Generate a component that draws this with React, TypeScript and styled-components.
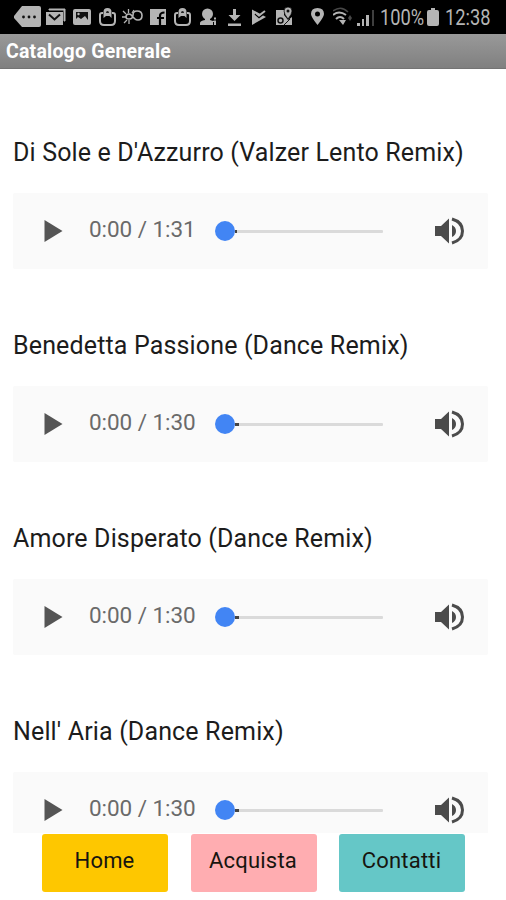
import React from 'react';
import styled, { createGlobalStyle } from 'styled-components';

const GlobalStyle = createGlobalStyle`
  * { box-sizing: border-box; }
  body { margin: 0; background: #fff; font-family: Roboto, "Liberation Sans", sans-serif; }
  button { font: inherit; border: 0; padding: 0; background: none; }
`;

const Screen = styled.div`
  width: 506px;
  height: 900px;
  display: flex;
  flex-direction: column;
  overflow: hidden;
  background: #fff;
`;

const StatusBar = styled.div`
  flex: none;
  height: 34px;
  padding: 0 13px 0 14px;
  display: flex;
  align-items: center;
  background: #000;
  color: #b4b4b4;
`;

const StatusIcon = styled.svg<{ $w: number; $gap?: number }>`
  flex: none;
  width: ${(p) => p.$w}px;
  height: 22px;
  margin-right: ${(p) => p.$gap ?? 5}px;
  fill: currentColor;
  stroke: none;
`;

const StatusText = styled.span<{ $w: number; $gap?: number }>`
  flex: none;
  width: ${(p) => p.$w}px;
  margin-right: ${(p) => p.$gap ?? 0}px;
  font-size: 22px;
  line-height: 34px;
  padding-top: 1px;
  transform: scaleX(0.83);
  transform-origin: 0 50%;
  white-space: nowrap;
`;

const TitleBar = styled.header`
  flex: none;
  height: 35px;
  padding-left: 6px;
  background: linear-gradient(#999, #808080);
  border-bottom: 1px solid #747474;
  color: #fff;
  font-size: 19.5px;
  font-weight: 700;
  line-height: 35px;
  letter-spacing: 0.2px;
`;

const TrackList = styled.main`
  height: 764px;
  flex: none;
  padding: 7px 18px 0 13px;
  overflow: hidden;
`;

const Track = styled.section`
  height: 193px;
  padding-top: 59px;
`;

const TrackTitle = styled.h2`
  margin: 0 0 22px;
  height: 36px;
  font-size: 25px;
  font-weight: 400;
  line-height: 36px;
  letter-spacing: 0.15px;
  color: #1c1c1c;
  white-space: nowrap;
`;

const Player = styled.div`
  height: 76px;
  display: flex;
  align-items: center;
  padding: 0 22px 0 31px;
  background: #fafafa;
  border-radius: 2px;
`;

const PlayButton = styled.button`
  width: 45px;
  height: 22px;
  display: flex;
  color: #555;
`;

const Time = styled.span`
  width: 114px;
  flex: none;
  padding-bottom: 4px;
  font-size: 22.5px;
  line-height: 30px;
  letter-spacing: -0.05px;
  color: #6a6a6a;
  white-space: nowrap;
`;

const Seek = styled.div`
  flex: none;
  width: 168px;
  height: 20px;
  margin-left: 12px;
  display: flex;
  align-items: center;
`;

const Thumb = styled.div`
  width: 20px;
  height: 20px;
  border-radius: 50%;
  background: #4285f4;
`;

const Buffered = styled.div<{ $w: number }>`
  width: ${(p) => p.$w}px;
  height: 3px;
  background: #444;
`;

const Rail = styled.div`
  flex: 1;
  height: 3px;
  background: #dadada;
  border-radius: 0 1px 1px 0;
`;

const VolumeButton = styled.button`
  width: 32px;
  height: 30px;
  margin-left: auto;
  display: flex;
  color: #4b4b4b;
`;

const Nav = styled.nav`
  height: 67px;
  padding: 1px 41px 0 42px;
  display: flex;
  justify-content: space-between;
`;

const NavButton = styled.button<{ $bg: string }>`
  width: 126px;
  height: 58px;
  padding: 0 1px 6px 0;
  border-radius: 3px;
  background: ${(p) => p.$bg};
  color: #17150f;
  font-size: 22px;
  letter-spacing: 0.2px;
`;

const tracks = [
  { title: "Di Sole e D'Azzurro (Valzer Lento Remix)", length: '1:31', buffered: 2 },
  { title: 'Benedetta Passione (Dance Remix)', length: '1:30', buffered: 4 },
  { title: 'Amore Disperato (Dance Remix)', length: '1:30', buffered: 4 },
  { title: "Nell' Aria (Dance Remix)", length: '1:30', buffered: 4 },
];

const Bag = ({ gap }: { gap?: number }) => (
  <StatusIcon $w={17} $gap={gap} viewBox="0 0 17 22">
    <path d="M4 7H3Q1 7 1 9v6q0 4 4 4h7q4 0 4-4V9q0-2-2-2h-1" fill="none" stroke="currentColor" strokeWidth="2" />
    <path d="M4.500 12V6q0-4 4-4t4 4v6l-2-2H7z" />
    <path d="M7 7q0-2 1.500-2T10 7z" fill="#222" />
  </StatusIcon>
);

function StatusIcons() {
  return (
    <>
      <StatusIcon $w={27} $gap={5} viewBox="0 0 27 22">
        <path d="M8 0h17q2 0 2 2v17q0 2-2 2H8L0 12v-2z" />
        <g fill="#111"><circle cx="9.500" cy="11" r="1.400" /><circle cx="15" cy="11" r="1.400" /><circle cx="20.500" cy="11" r="1.400" /></g>
      </StatusIcon>
      <StatusIcon $w={20} $gap={7} viewBox="0 0 20 22">
        <path d="M3 4V3h16v12h-1V4z" stroke="currentColor" strokeWidth="1" />
        <path d="M0 6h17v13H0z" />
        <path d="m3 8.500 5.500 5 5.500-5" fill="none" stroke="#111" strokeWidth="2" />
      </StatusIcon>
      <StatusIcon $w={18} $gap={8} viewBox="0 0 18 22">
        <path d="M2 3h14q2 0 2 2v12q0 2-2 2H2q-2 0-2-2V5q0-2 2-2z" />
        <path d="M3 6h12v8l-3-4-4 3-3-2-2 2z" fill="#111" />
        <circle cx="5.500" cy="8" r="1.200" />
      </StatusIcon>
      <Bag gap={6} />
      <StatusIcon $w={21} $gap={7} viewBox="0 0 21 22">
        <path d="M1 5l3 3M6.500 3v4M0 11h4M2 17l3-3M7 18v-4M10 7l2-3" fill="none" stroke="currentColor" strokeWidth="1.300" />
        <path d="M4 11q0-3 3-3 2 0 3 2l3 3q1 1 3 1 4 0 4-4.500T15 5q-4 0-4 4 0 4-4 4-3 0-3-2z" fill="none" stroke="currentColor" strokeWidth="1.600" />
      </StatusIcon>
      <StatusIcon $w={16} $gap={8} viewBox="0 0 16 22">
        <path d="M0 3h16v16H0z" />
        <path d="M10 19v-9q0-3.500 4.500-3.500M7 12h7" fill="none" stroke="#000" strokeWidth="2.200" />
      </StatusIcon>
      <Bag gap={9} />
      <StatusIcon $w={17} $gap={11} viewBox="0 0 17 22">
        <circle cx="7.500" cy="8" r="5.500" />
        <path d="M5 11h5v3l3 1v4H0v-2q0-2 5-3zM14 14.500h2V19h-2v-3h-1v-1z" />
        <path d="M14 11.500h2v2h-2z" />
      </StatusIcon>
      <StatusIcon $w={13} $gap={11} viewBox="0 0 13 22">
        <path d="M5 3h3v6h4.500l-6 6-6-6H5zM0 17.500h13V20H0z" />
      </StatusIcon>
      <StatusIcon $w={14} $gap={10} viewBox="0 0 14 22">
        <path d="M0 3.500l14 7.500L0 19z" />
        <path d="M3 8l4 3.500L14 6" fill="none" stroke="#000" strokeWidth="1.500" />
        <path d="M4 7l3 2.500L13 5" fill="none" stroke="currentColor" strokeWidth="2" />
      </StatusIcon>
      <StatusIcon $w={16} $gap={19} viewBox="0 0 16 22">
        <path d="M0 4h8v5l4 5 4-3v8H0z" />
        <circle cx="4.500" cy="14.500" r="2.500" fill="none" stroke="#111" strokeWidth="1.500" />
        <path d="M8 19l6-6" stroke="#111" />
        <path d="M12 13q-4-5-4-8 0-4 4-4t4 4q0 3-4 8z" stroke="#000" strokeWidth=".7" />
        <circle cx="12" cy="5" r="1.500" fill="#111" />
      </StatusIcon>
      <StatusIcon $w={13} $gap={9} viewBox="0 0 13 22">
        <path fillRule="evenodd" d="M6.500 19Q0 11 0 8 0 2 6.500 2T13 8Q13 11 6.500 19zM6.500 10.500a2.500 2.500 0 1 0 0-5 2.500 2.500 0 0 0 0 5z" />
      </StatusIcon>
      <StatusIcon $w={20} $gap={4} viewBox="0 0 20 22">
        <g fill="none" stroke="currentColor">
          <path d="M0 5q8-6 15 1" opacity=".4" strokeWidth="1.500" />
          <path d="M0 9q6-5 13 0M3 13q4-4 8 0" strokeWidth="2" />
        </g>
        <path d="M6 14h7l-3 5z" /><path d="m17 9 2 3-2 3-2-3z" opacity=".4" />
      </StatusIcon>
      <StatusIcon $w={17} $gap={6} viewBox="0 0 17 22">
        <path d="M0 17h3v3H0zM5 13h2v7H5zM9 9h3v11H9z" />
        <path d="M15 4h2v16h-2z" opacity=".35" />
      </StatusIcon>
    </>
  );
}

export default function App() {
  return (
    <Screen>
      <GlobalStyle />
      <StatusBar>
        <StatusIcons />
        <StatusText $w={44} $gap={3}>100%</StatusText>
        <StatusIcon $w={12} $gap={6} viewBox="0 0 12 22">
          <path d="M4 2h4v2h2q2 0 2 2v12q0 2-2 2H2q-2 0-2-2V6q0-2 2-2h2z" />
        </StatusIcon>
        <StatusText $w={46}>12:38</StatusText>
      </StatusBar>
      <TitleBar>Catalogo Generale</TitleBar>
      <TrackList>
        {tracks.map((track) => (
          <Track key={track.title}>
            <TrackTitle>{track.title}</TrackTitle>
            <Player>
              <PlayButton aria-label="Play">
                <svg width="19" height="22" viewBox="0 0 19 22" fill="currentColor"><path d="M.5 0 18.500 11 .5 22z" /></svg>
              </PlayButton>
              <Time>0:00 / {track.length}</Time>
              <Seek>
                <Thumb />
                <Buffered $w={track.buffered} />
                <Rail />
              </Seek>
              <VolumeButton aria-label="Volume">
                <svg width="32" height="30" viewBox="0 0 32 30" fill="currentColor">
                  <path d="M1 10h6l8-7.500v25L7 20H1zM18 9q4 2 4 6t-4 6z" />
                  <path d="M18 3q10.500 3 10.500 12T18 27" fill="none" stroke="currentColor" strokeWidth="3" />
                </svg>
              </VolumeButton>
            </Player>
          </Track>
        ))}
      </TrackList>
      <Nav>
        <NavButton $bg="#fec700">Home</NavButton>
        <NavButton $bg="#ffadb1">Acquista</NavButton>
        <NavButton $bg="#65c7c7">Contatti</NavButton>
      </Nav>
    </Screen>
  );
}
